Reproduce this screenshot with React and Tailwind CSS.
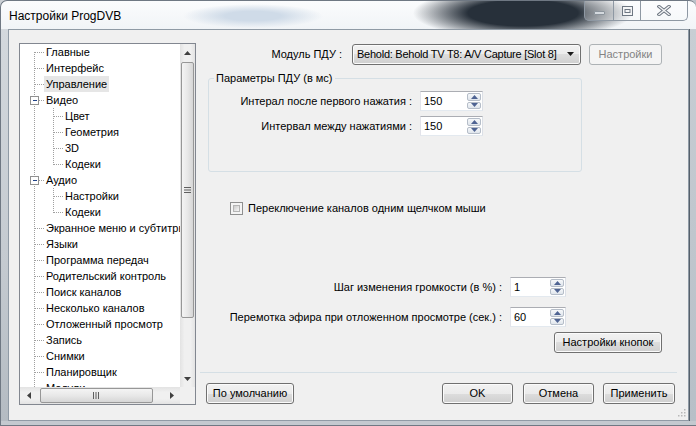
import React from "react";

const tree = [
  { t: "Главные", l: 0, first: true },
  { t: "Интерфейс", l: 0 },
  { t: "Управление", l: 0, sel: true },
  { t: "Видео", l: 0, box: true },
  { t: "Цвет", l: 1 },
  { t: "Геометрия", l: 1 },
  { t: "3D", l: 1 },
  { t: "Кодеки", l: 1, last: true },
  { t: "Аудио", l: 0, box: true },
  { t: "Настройки", l: 1 },
  { t: "Кодеки", l: 1, last: true },
  { t: "Экранное меню и субтитры", l: 0 },
  { t: "Языки", l: 0 },
  { t: "Программа передач", l: 0 },
  { t: "Родительский контроль", l: 0 },
  { t: "Поиск каналов", l: 0 },
  { t: "Несколько каналов", l: 0 },
  { t: "Отложенный просмотр", l: 0 },
  { t: "Запись", l: 0 },
  { t: "Снимки", l: 0 },
  { t: "Планировщик", l: 0 },
  { t: "Модули", l: 0 },
];

const btn =
  "flex items-center justify-center border border-[#707070] rounded-[3px] bg-[linear-gradient(#f2f2f2_0%,#ebebeb_50%,#dddddd_50%,#cfcfcf_100%)] shadow-[inset_0_0_0_1px_#fbfbfb]";

export default function App() {
  return (
    <div className="w-[696px] h-[426px] overflow-hidden relative font-['Liberation_Sans',Arial,sans-serif] text-[11px] text-black bg-[linear-gradient(90deg,#c9ced3,#dfe3e7_2%,#eef1f4_50%,#dfe3e7_98%,#b9c0c7)]">
      {/* ===== TITLE BAR ===== */}
      <div className="h-[29px] flex items-start rounded-t-[7px] border-t border-l border-[#6f7883] bg-[radial-gradient(ellipse_110px_26px_at_522px_12px,#27303a_50%,rgba(40,48,58,0)_100%),radial-gradient(ellipse_70px_12px_at_252px_15px,#cfdbe8_40%,rgba(220,228,236,0)_100%),linear-gradient(#fbfcfd,#f1f4f7)]">
        <span className="ml-[8px] mt-[7px] text-[12px] leading-[16px]">Настройки ProgDVB</span>
        <div className="ml-auto mr-[8px] flex h-[20px] border border-t-0 border-[#8e98a3] rounded-b-[5px] overflow-hidden bg-[rgba(255,255,255,0.25)]">
          <div className="w-[28px] flex items-center justify-center pt-[5px]">
            <div className="w-[11px] h-[4px] border border-[#8c949c] bg-[#d4d9de] rounded-[1px]" />
          </div>
          <div className="w-[27px] flex items-center justify-center border-l border-[#8e98a3]">
            <svg width="11" height="10" viewBox="0 0 11 10">
              <rect x="0.5" y="0.5" width="10" height="9" fill="#f4f5f6" stroke="#6e7782" />
              <rect x="3" y="3.5" width="5" height="3" fill="none" stroke="#6e7782" />
            </svg>
          </div>
          <div className="w-[47px] flex items-center justify-center border-l border-[#8e98a3]">
            <svg width="14" height="11" viewBox="0 0 14 11">
              <path d="M2 1.5 L12 9.5 M12 1.5 L2 9.5" stroke="#6e7782" strokeWidth="3.4" strokeLinecap="square" />
              <path d="M2 1.5 L12 9.5 M12 1.5 L2 9.5" stroke="#f4f5f6" strokeWidth="1.4" strokeLinecap="square" />
            </svg>
          </div>
        </div>
      </div>

      {/* ===== BODY ===== */}
      <div className="flex h-[392px]">
        <div className="w-[8px] border-l border-[#6f7883] bg-[linear-gradient(#d3d8dd,#c4cad0_60%,#b4bbc2)]" />

        <div className="w-[681px] h-[392px] border border-[#8f9aa5] bg-[#f0f0f0] flex relative">
          {/* tree */}
          <div className="ml-[10px] mt-[13px] w-[177px] h-[362px] border border-[#828790] bg-white flex flex-col">
            <div className="flex h-[343px]">
              <div className="w-[160px] overflow-hidden">
                {tree.map((it, i) => (
                  <TreeRow key={i} item={it} />
                ))}
              </div>
              <VScroll />
            </div>
            <div className="flex h-[17px]">
              <HScroll />
              <div className="w-[15px] bg-[#f0f0f0]" />
            </div>
          </div>

          {/* right pane */}
          <div className="flex-1 flex flex-col">
            <div className="mt-[14px] flex items-center h-[21px]">
              <span className="w-[146px] text-right">Модуль ПДУ :</span>
              <div className={btn + " ml-[10px] w-[229px] h-[21px] !justify-between overflow-hidden"}>
                <span className="pl-[4px] whitespace-nowrap tracking-[-0.25px]">Behold: Behold TV T8: A/V Capture [Slot 8]</span>
                <svg width="8" height="5" viewBox="0 0 8 5" className="mr-[5px] shrink-0">
                  <path d="M0 0 H7 L3.5 4 Z" fill="#1a1a1a" />
                </svg>
              </div>
              <div className="ml-[8px] w-[73px] h-[21px] flex items-center justify-center border border-[#adb2b5] rounded-[3px] bg-[#f4f4f4] text-[#838383]">
                Настройки
              </div>
            </div>

            <fieldset className="ml-[12px] mt-[6px] w-[374px] border border-[#d5dfe5] rounded-[3px] px-[5px] pb-[35px]">
              <legend className="px-[2px] leading-[14px]">Параметры ПДУ (в мс)</legend>
              <div className="mt-[6px] flex items-center">
                <span className="w-[198px] text-right whitespace-nowrap">Интерал после первого нажатия :</span>
                <Spin value="150" w="w-[63px]" />
              </div>
              <div className="mt-[5px] flex items-center">
                <span className="w-[198px] text-right whitespace-nowrap">Интервал между нажатиями :</span>
                <Spin value="150" w="w-[63px]" />
              </div>
            </fieldset>

            <div className="mt-[30px] ml-[34px] flex items-center h-[13px]">
              <div className="w-[13px] h-[13px] border border-[#8e8f8f] bg-[#f4f4f4] p-[2px]">
                <div className="w-full h-full border border-[#b4b4b4] bg-[linear-gradient(135deg,#cbcbcb,#f7f7f7)]" />
              </div>
              <span className="ml-[5px] leading-[13px]">Переключение каналов одним щелчком мыши</span>
            </div>

            <div className="mt-[62px] flex items-center">
              <span className="w-[306px] text-right whitespace-nowrap">Шаг изменения громкости (в %) :</span>
              <Spin value="1" w="w-[56px]" />
            </div>
            <div className="mt-[10px] flex items-center">
              <span className="w-[306px] text-right whitespace-nowrap">Перемотка эфира при отложенном просмотре (сек.) :</span>
              <Spin value="60" w="w-[56px]" />
            </div>
            <div className={btn + " ml-[358px] mt-[5px] w-[108px] h-[21px]"}>Настройки кнопок</div>

            <div className="mt-[19px] ml-[4px] w-[477px] h-px bg-[#d5dfe5]" />

            <div className="mt-[10px] flex">
              <div className={btn + " ml-[10px] w-[88px] h-[21px]"}>По умолчанию</div>
              <div className={btn + " ml-[148px] w-[71px] h-[21px]"}>OK</div>
              <div className={btn + " ml-[10px] w-[71px] h-[21px]"}>Отмена</div>
              <div className={btn + " ml-[9px] w-[72px] h-[21px]"}>Применить</div>
            </div>
          </div>

          {/* size grip */}
          <svg width="10" height="10" viewBox="0 0 10 10" className="absolute right-[2px] bottom-[2px]">
            {[[8, 0], [8, 3], [5, 3], [8, 6], [5, 6], [2, 6]].map(([x, y], i) => (
              <rect key={i} x={x} y={y + 1} width="1.5" height="1.5" fill="#b8b8b8" />
            ))}
          </svg>
        </div>

        <div className="flex-1 border-l border-[#55606b] bg-[linear-gradient(#c8ced4,#b7bfc7)]" />
      </div>
      <div className="h-[5px] border-b border-l border-[#6f7883] bg-[#c3c9cf]" />
    </div>
  );
}

/* ===== SMALL COMPONENTS ===== */

const TreeRow = ({ item }) => {
  const w = item.l === 0 ? 24 : 43;
  const dot = { stroke: "#a0a0a0", strokeDasharray: "1 1", shapeRendering: "crispEdges" };
  return (
    <div className="flex h-[16px] items-center whitespace-nowrap">
      <svg width={w} height="16" viewBox={`0 0 ${w} 16`} className="shrink-0">
        <line x1="14.5" x2="14.5" y1={item.first ? 8 : 0} y2="16" {...dot} />
        {item.l === 0 && <line x1={item.box ? 19 : 15} x2="24" y1="8.5" y2="8.5" {...dot} />}
        {item.l === 1 && (
          <>
            <line x1="33.5" x2="33.5" y1="0" y2={item.last ? 9 : 16} {...dot} />
            <line x1="34" x2="43" y1="8.5" y2="8.5" {...dot} />
          </>
        )}
        {item.box && (
          <>
            <rect x="10.5" y="4.5" width="8" height="8" fill="#fff" stroke="#919191" shapeRendering="crispEdges" />
            <line x1="12.5" x2="17" y1="8.5" y2="8.5" stroke="#21438a" shapeRendering="crispEdges" />
          </>
        )}
      </svg>
      <span className={`px-[2px] leading-[16px] ${item.sel ? "bg-[#e6e6e6]" : ""}`}>{item.t}</span>
    </div>
  );
};

const Arrow = ({ dir, color = "#404040" }) => {
  const p = {
    up: "M0 4 L3.5 0 L7 4 Z",
    down: "M0 0 L7 0 L3.5 4 Z",
    left: "M4 0 L4 7 L0 3.5 Z",
    right: "M0 0 L4 3.5 L0 7 Z",
  }[dir];
  const vert = dir === "up" || dir === "down";
  return (
    <svg width={vert ? 7 : 4} height={vert ? 4 : 7} viewBox={vert ? "0 0 7 4" : "0 0 4 7"}>
      <path d={p} fill={color} />
    </svg>
  );
};

const VScroll = () => (
  <div className="w-[15px] flex flex-col bg-[linear-gradient(90deg,#e3e3e3,#f0f0f0_30%,#f0f0f0_70%,#e3e3e3)]">
    <div className="h-[17px] flex items-center justify-center">
      <Arrow dir="up" />
    </div>
    <div className="flex-1 px-[1px]">
      <div className="mt-[1px] h-[256px] border border-[#979797] rounded-[2px] bg-[linear-gradient(90deg,#f4f4f4,#e8e8e8_50%,#d6d6d6)] flex items-center justify-center">
        <svg width="7" height="7" viewBox="0 0 7 7">
          {[0.5, 3, 5.5].map((y) => (
            <line key={y} x1="0" x2="7" y1={y} y2={y} stroke="#5f5f5f" />
          ))}
        </svg>
      </div>
    </div>
    <div className="h-[17px] flex items-center justify-center">
      <Arrow dir="down" />
    </div>
  </div>
);

const HScroll = () => (
  <div className="w-[160px] flex bg-[linear-gradient(#e3e3e3,#f0f0f0_30%,#f0f0f0_70%,#e3e3e3)]">
    <div className="w-[17px] flex items-center justify-center">
      <Arrow dir="left" />
    </div>
    <div className="flex-1 py-[1px]">
      <div className="ml-[3px] w-[113px] h-full border border-[#979797] rounded-[2px] bg-[linear-gradient(#f4f4f4,#e8e8e8_50%,#d6d6d6)] flex items-center justify-center">
        <svg width="7" height="7" viewBox="0 0 7 7">
          {[0.5, 3, 5.5].map((x) => (
            <line key={x} y1="0" y2="7" x1={x} x2={x} stroke="#5f5f5f" />
          ))}
        </svg>
      </div>
    </div>
    <div className="w-[17px] flex items-center justify-center">
      <Arrow dir="right" />
    </div>
  </div>
);

const Spin = ({ value, w }) => (
  <div className={`ml-[8px] ${w} h-[20px] flex border border-[#abadb3] border-b-[#e3e9ef] border-l-[#e2e3ea] border-r-[#dbdfe6] bg-white`}>
    <span className="flex-1 pl-[3px] leading-[18px]">{value}</span>
    <div className="w-[15px] flex flex-col gap-[1px] py-[1px] pr-[1px]">
      <div className="flex-1 flex items-center justify-center border border-[#b5bdc8] rounded-[2px] bg-[linear-gradient(#f6f8fa,#dfe5ec)]">
        <Arrow dir="up" color="#4e6392" />
      </div>
      <div className="flex-1 flex items-center justify-center border border-[#b5bdc8] rounded-[2px] bg-[linear-gradient(#f6f8fa,#dfe5ec)]">
        <Arrow dir="down" color="#4e6392" />
      </div>
    </div>
  </div>
);
